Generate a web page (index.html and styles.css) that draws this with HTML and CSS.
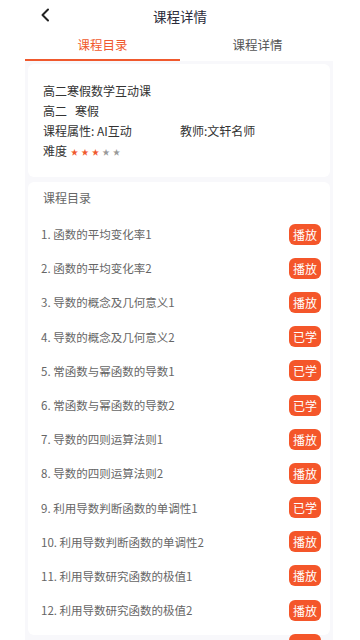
FILE: index.html
```html
<!DOCTYPE html>
<html lang="zh">
<head>
<meta charset="utf-8">
<link rel="stylesheet" href="styles.css">
</head>
<body>
<div class="header">
  <svg class="back" width="12" height="14" viewBox="0 0 12 14"><path d="M8 1.5 L2.5 7 L8 12.5" fill="none" stroke="#222" stroke-width="2" stroke-linecap="round" stroke-linejoin="round"/></svg>
  <div class="title">课程详情</div>
</div>
<div class="tabs">
  <div class="tab active">课程目录</div>
  <div class="tab">课程详情</div>
</div>
<div class="panel">
  <div class="card info">
    <div class="line">高二寒假数学互动课</div>
    <div class="line">高二&nbsp;&nbsp;&nbsp;寒假</div>
    <div class="line attrs"><span class="attr">课程属性: AI互动</span><span>教师:文轩名师</span></div>
    <div class="line">难度 <span class="stars"><span class="on">★</span><span class="on">★</span><span class="on">★</span><span class="off">★</span><span class="off">★</span></span></div>
  </div>
  <div class="card list">
    <div class="list-title">课程目录</div>
    <div class="row"><span class="name">1. 函数的平均变化率1</span><span class="btn">播放</span></div>
    <div class="row"><span class="name">2. 函数的平均变化率2</span><span class="btn">播放</span></div>
    <div class="row"><span class="name">3. 导数的概念及几何意义1</span><span class="btn">播放</span></div>
    <div class="row"><span class="name">4. 导数的概念及几何意义2</span><span class="btn">已学</span></div>
    <div class="row"><span class="name">5. 常函数与幂函数的导数1</span><span class="btn">已学</span></div>
    <div class="row"><span class="name">6. 常函数与幂函数的导数2</span><span class="btn">已学</span></div>
    <div class="row"><span class="name">7. 导数的四则运算法则1</span><span class="btn">播放</span></div>
    <div class="row"><span class="name">8. 导数的四则运算法则2</span><span class="btn">播放</span></div>
    <div class="row"><span class="name">9. 利用导数判断函数的单调性1</span><span class="btn">已学</span></div>
    <div class="row"><span class="name">10. 利用导数判断函数的单调性2</span><span class="btn">播放</span></div>
    <div class="row"><span class="name">11. 利用导数研究函数的极值1</span><span class="btn">播放</span></div>
    <div class="row"><span class="name">12. 利用导数研究函数的极值2</span><span class="btn">播放</span></div>
    <div class="row"><span class="name"></span><span class="btn blank"></span></div>
  </div>
</div>
</body>
</html>
```
FILE: styles.css
```css
* { box-sizing: border-box; }
html, body { margin: 0; padding: 0; }
body {
  width: 360px;
  height: 640px;
  overflow: hidden;
  background: #fff;
  font-family: "Noto Sans CJK SC", "Noto Sans", sans-serif;
  color: #333;
}
.header {
  height: 31px;
  display: flex;
  align-items: center;
  justify-content: center;
  position: relative;
}
.back { position: absolute; left: 40px; top: 8px; }
.title { font-size: 13.5px; color: #2b2b3a; }
.tabs {
  display: flex;
  margin: 0 25px;
  width: 310px;
  height: 30px;
}
.tab {
  width: 155px;
  text-align: center;
  font-size: 12.5px;
  line-height: 28px;
  color: #555;
  border-bottom: 2px solid transparent;
}
.tab.active { color: #f0592d; border-bottom-color: #f0592d; }
.panel {
  margin-left: 25px;
  width: 308px;
  height: 590px;
  background: #f8f8fb;
  padding: 3px;
}
.card { background: #fff; border-radius: 6px; }
.info { padding: 17px 15px 15px; height: 113px; }
.line { font-size: 12px; line-height: 20px; color: #333; height: 20px; }
.attrs { display: flex; }
.attr { width: 137px; }
.stars { font-size: 7.5px; letter-spacing: 3px; vertical-align: 1px; margin-left: 1px; }
.on { color: #f0592d; }
.off { color: #999; }
.list {
  margin-top: 5px;
  padding: 6px 9px 0 13px;
  height: 453px;
}
.list-title { font-size: 12px; line-height: 20px; color: #666; margin: 0 0 9px 2px; }
.row {
  height: 34.2px;
  display: flex;
  align-items: center;
  justify-content: space-between;
}
.name { font-size: 11.5px; color: #666; }
.btn {
  width: 32px;
  height: 21px;
  border-radius: 6px;
  background: #f4562a;
  color: #fff;
  font-size: 12px;
  line-height: 21px;
  text-align: center;
}
```
